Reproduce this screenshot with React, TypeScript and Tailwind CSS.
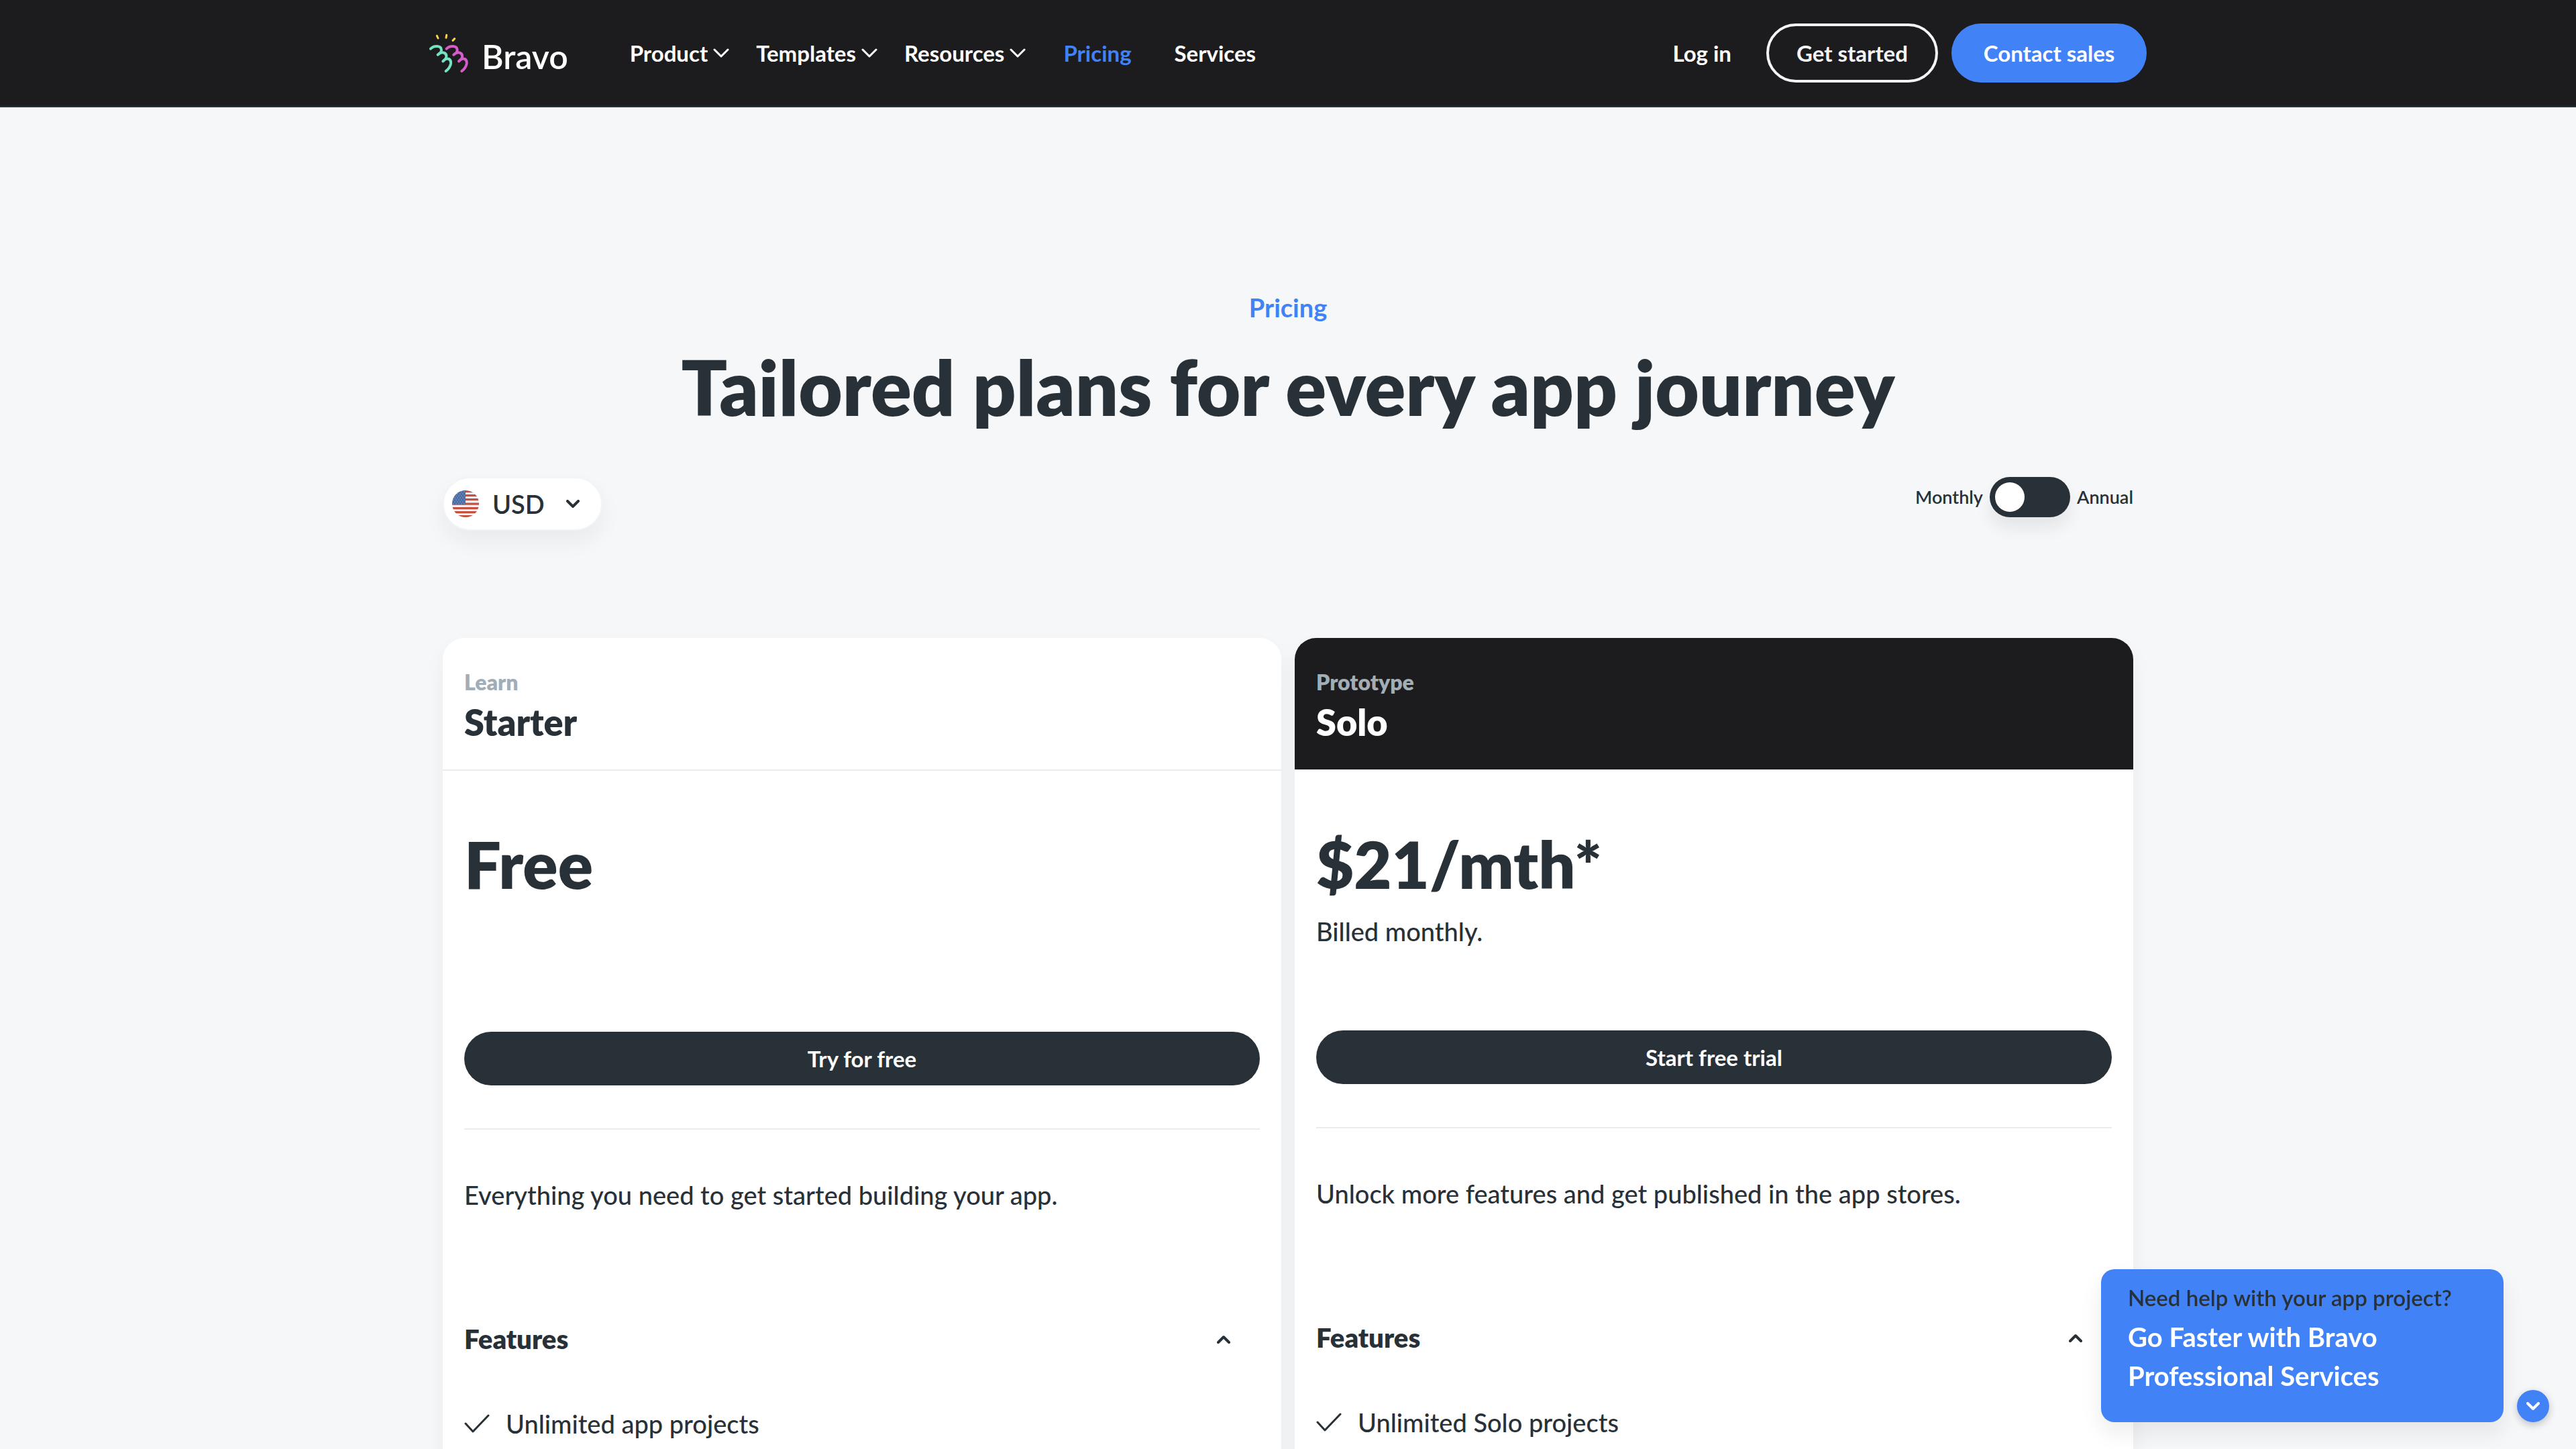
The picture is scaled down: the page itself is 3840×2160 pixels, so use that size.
import { useState } from "react";

type Plan = {
  stage: string;
  name: string;
  price: string;
  note?: string;
  cta: string;
  summary: string;
  features: string[];
  dark?: boolean;
};

const plans: Plan[] = [
  {
    stage: "Learn",
    name: "Starter",
    price: "Free",
    cta: "Try for free",
    summary: "Everything you need to get started building your app.",
    features: ["Unlimited app projects"],
  },
  {
    stage: "Prototype",
    name: "Solo",
    price: "$21/mth*",
    note: "Billed monthly.",
    cta: "Start free trial",
    summary: "Unlock more features and get published in the app stores.",
    features: ["Unlimited Solo projects"],
    dark: true,
  },
];

function BravoMark() {
  const squiggle =
    "M36 98C50 83 84 82 84 104C84 114 76 120 68 125C84 108 108 114 106 134C105 144 98 149 91 154C108 134 128 142 126 164C124 178 114 190 104 198";
  return (
    <svg
      viewBox="30 30 174 174"
      className="size-[58px]"
      fill="none"
      strokeLinecap="round"
      strokeLinejoin="round"
      aria-hidden="true"
    >
      <g stroke="#ffd24a" strokeWidth="9">
        <path d="M64 40L69 51" />
        <path d="M107 37L105 49" />
        <path d="M143 53L135 61" />
      </g>
      <g strokeWidth="12">
        <path d={squiggle} stroke="#74e3c4" />
        <path d={squiggle} transform="translate(71 0)" stroke="#d65bcb" />
      </g>
    </svg>
  );
}

function ThinChevron() {
  return (
    <svg viewBox="0 0 24 14" className="w-6 h-[14px]" fill="none" stroke="currentColor" strokeWidth="3" strokeLinecap="round" strokeLinejoin="round" aria-hidden="true">
      <path d="M2 2L12 12L22 2" />
    </svg>
  );
}

function BoldChevron({ up = false }: { up?: boolean }) {
  return (
    <svg viewBox="0 0 20 13" className="w-5 h-[13px]" fill="none" stroke="currentColor" strokeWidth="4" strokeLinecap="round" strokeLinejoin="round" aria-hidden="true">
      <path d={up ? "M2 11L10 3L18 11" : "M2 2L10 10L18 2"} />
    </svg>
  );
}

function UsFlag() {
  const stars: [number, number][] = [];
  for (let row = 0; row < 7; row++)
    for (let col = 0; col < 5; col++) stars.push([(row % 2 ? 4 : 2) + col * 4, 2 + row * 3]);
  return (
    <svg viewBox="0 0 40 40" className="size-10" aria-hidden="true">
      <clipPath id="flag-circle">
        <circle cx="20" cy="20" r="20" />
      </clipPath>
      <g clipPath="url(#flag-circle)">
        <rect width="40" height="40" fill="#f4f2f4" />
        {[0, 6, 12, 18.5, 25, 31, 37].map((y) => (
          <rect key={y} y={y} width="40" height="3.2" fill="#c0523f" />
        ))}
        <rect width="20" height="21.5" fill="#4a6ea5" />
        {stars.map(([x, y]) => (
          <circle key={`${x}-${y}`} cx={x} cy={y} r="0.6" fill="#c5d2e6" />
        ))}
      </g>
    </svg>
  );
}

function Header() {
  return (
    <header className="border-b-2 border-[#263238] bg-[#1c1c1e] text-white">
      <div className="mx-auto flex h-[158px] max-w-[2560px] items-center text-[33px] leading-10 font-bold">
        <a href="#home" className="flex items-end gap-5">
          <BravoMark />
          <span className="text-[50px] leading-[48px] font-semibold">Bravo</span>
        </a>
        <nav aria-label="Main" className="ml-[92px]">
          <ul className="flex items-center gap-10">
            {["Product", "Templates", "Resources"].map((item) => (
              <li key={item}>
                <button type="button" className="flex items-center gap-2">
                  {item}
                  <ThinChevron />
                </button>
              </li>
            ))}
            <li className="ml-4">
              <a href="#pricing" aria-current="page" className="text-[#4182f7]">
                Pricing
              </a>
            </li>
            <li className="ml-6">
              <a href="#services">Services</a>
            </li>
          </ul>
        </nav>
        <a href="#login" className="ml-auto">
          Log in
        </a>
        <a
          href="#start"
          className="ml-[52px] flex h-[88px] w-64 items-center justify-center rounded-full border-4 border-[#f5f3f6] text-[#f5f3f6]"
        >
          Get started
        </a>
        <a href="#sales" className="ml-5 flex h-[88px] w-[291px] items-center justify-center rounded-full bg-[#4182f7]">
          Contact sales
        </a>
      </div>
    </header>
  );
}

function PlanCard({ plan }: { plan: Plan }) {
  const [open, setOpen] = useState(true);
  return (
    <article className="rounded-4xl bg-white pb-16 shadow-[0_16px_32px_rgba(28,28,30,0.05)]">
      <header
        className={
          plan.dark
            ? "rounded-t-4xl border-b-2 border-[#f5f5f7] bg-[#1c1c1e] bg-clip-padding px-8 pt-[46px] pb-[38px] text-white"
            : "border-b-2 border-[#ebebf0] px-8 pt-[46px] pb-[38px]"
        }
      >
        <p className="text-[32px] leading-10 font-extrabold text-[#a2aeb5]">{plan.stage}</p>
        <h2 className="mt-2 text-[54px] leading-[64px] font-extrabold">{plan.name}</h2>
      </header>
      <div className="px-8 pt-[79px]">
        <p className="text-[97px] leading-[120px] font-extrabold">{plan.price}</p>
        {plan.note ? (
          <p className="mt-3 text-[38px] leading-[56px] font-medium">{plan.note}</p>
        ) : (
          <div className="h-[70px]" />
        )}
        <button
          type="button"
          className="mt-[120px] h-20 w-full rounded-full bg-[#293138] text-[33px] leading-10 font-bold text-white"
        >
          {plan.cta}
        </button>
        <hr className="mt-16 border-t-2 border-[#ebebf0]" />
        <p className="mt-[69px] text-[38px] leading-[56px] font-medium">{plan.summary}</p>
        <h3 className="mt-[159px]">
          <button
            type="button"
            aria-expanded={open}
            onClick={() => setOpen(!open)}
            className="flex w-full items-center justify-between pr-11 text-[40px] leading-[56px] font-extrabold"
          >
            Features
            <BoldChevron up={open} />
          </button>
        </h3>
        {open && (
          <ul className="mt-[70px]">
            {plan.features.map((feature) => (
              <li key={feature} className="flex items-center gap-6 text-[38px] leading-[56px] font-medium">
                <svg viewBox="0 0 38 28" className="h-7 w-[38px]" fill="none" stroke="currentColor" strokeWidth="3" strokeLinecap="round" strokeLinejoin="round" aria-hidden="true">
                  <path d="M2 14L13 26L36 2" />
                </svg>
                {feature}
              </li>
            ))}
          </ul>
        )}
      </div>
    </article>
  );
}

export default function App() {
  const [annual, setAnnual] = useState(false);
  const [promo, setPromo] = useState(true);
  return (
    <div className="min-h-screen bg-[#f5f7f9] font-['Lato',sans-serif] text-[#293138]">
      <Header />
      <main className="mx-auto max-w-[2560px] px-5 pt-[270px] pb-20">
        <p className="text-center text-[38px] leading-[56px] font-bold text-[#4182f7]">Pricing</p>
        <h1 className="mt-6 text-center text-[113px] leading-[132px] font-extrabold">
          Tailored plans for every app journey
        </h1>
        <div className="mt-[69px] flex items-start justify-between">
          <button
            type="button"
            aria-haspopup="listbox"
            className="flex h-20 items-center rounded-full border-2 border-[#f2f4f8] bg-white pr-8 pl-3 text-[38px] font-semibold shadow-[0_16px_32px_rgba(28,28,30,0.06)]"
          >
            <UsFlag />
            <span className="ml-5">USD</span>
            <span className="ml-8">
              <BoldChevron />
            </span>
          </button>
          <label className="flex cursor-pointer items-center gap-[10px] text-[27px] leading-[60px] font-semibold">
            Monthly
            <input
              type="checkbox"
              role="switch"
              aria-label="Annual billing"
              checked={annual}
              onChange={(e) => setAnnual(e.target.checked)}
              className="peer sr-only"
            />
            <span className="flex h-[60px] w-[120px] rounded-full bg-[#293138] p-2 shadow-[0_16px_24px_rgba(28,28,30,0.08)] peer-checked:justify-end">
              <span className="size-11 rounded-full bg-white" />
            </span>
            Annual
          </label>
        </div>
        <div className="mt-40 grid grid-cols-2 items-start gap-5">
          {plans.map((plan) => (
            <PlanCard key={plan.name} plan={plan} />
          ))}
        </div>
      </main>
      <aside className="fixed right-10 bottom-10 flex items-end gap-5">
        {promo && (
          <a
            href="#professional-services"
            className="block w-[600px] rounded-[20px] bg-[#4182f7] px-10 pt-5 pb-10 shadow-[0_16px_32px_rgba(28,28,30,0.08)]"
          >
            <p className="text-[33px] leading-[44px] font-semibold">Need help with your app project?</p>
            <p className="mt-2 text-[40px] leading-[58px] font-bold text-white">
              Go Faster with Bravo
              <br />
              Professional Services
            </p>
          </a>
        )}
        <button
          type="button"
          aria-label="Toggle help message"
          onClick={() => setPromo(!promo)}
          className="flex size-12 items-center justify-center rounded-full bg-[#4182f7] text-white shadow-[0_4px_12px_rgba(28,28,30,0.25)]"
        >
          <BoldChevron />
        </button>
      </aside>
    </div>
  );
}
